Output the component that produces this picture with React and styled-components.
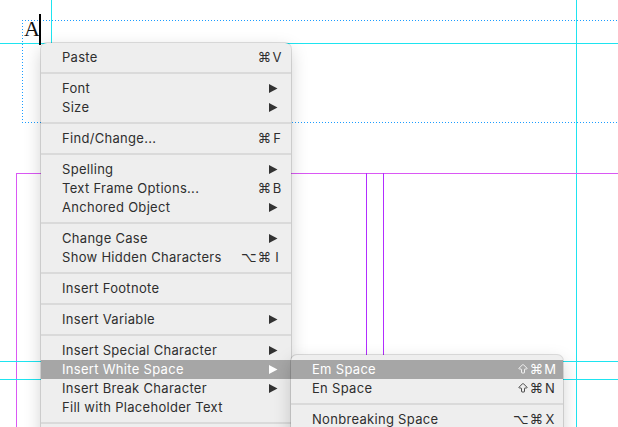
import React from "react";
import styled, { createGlobalStyle } from "styled-components";
import { ArrowBigUp } from "lucide-react";

const GlobalStyle = createGlobalStyle`
  html, body {
    margin: 0;
    padding: 0;
    background: #ffffff;
  }
  body {
    overflow: hidden;
  }
`;

const CYAN = "#1ee4f0";
const MARGIN = "#da58f4";
const COLUMN = "#b22dff";

const mainItems = [
  { label: "Paste", keys: "⌘", key: "V" },
  "sep",
  { label: "Font", sub: true },
  { label: "Size", sub: true },
  "sep",
  { label: "Find/Change...", keys: "⌘", key: "F" },
  "sep",
  { label: "Spelling", sub: true },
  { label: "Text Frame Options...", keys: "⌘", key: "B" },
  { label: "Anchored Object", sub: true },
  "sep",
  { label: "Change Case", sub: true },
  { label: "Show Hidden Characters", keys: "⌥⌘", key: "I" },
  "sep",
  { label: "Insert Footnote" },
  "sep",
  { label: "Insert Variable", sub: true },
  "sep",
  { label: "Insert Special Character", sub: true },
  { label: "Insert White Space", sub: true, active: true },
  { label: "Insert Break Character", sub: true },
  { label: "Fill with Placeholder Text" },
  "sep",
];

const spaceItems = [
  { label: "Em Space", shift: true, keys: "⌘", key: "M", active: true },
  { label: "En Space", shift: true, keys: "⌘", key: "N" },
  "sep",
  { label: "Nonbreaking Space", keys: "⌥⌘", key: "X" },
];

function MenuList({ items, keyWidth }) {
  return items.map((item, i) => {
    if (item === "sep") return <Separator key={i} />;
    return (
      <Row key={i} $active={item.active}>
        <Label>{item.label}</Label>
        {item.key && (
          <Shortcut>
            {item.shift && <ShiftIcon size={12} strokeWidth={1.7} />}
            <Mods>{item.keys}</Mods>
            <Key $w={keyWidth}>{item.key}</Key>
          </Shortcut>
        )}
        {item.sub && (
          <Arrow viewBox="0 0 9 9" $active={item.active}>
            <polygon points="0,0 8.5,4.5 0,9" />
          </Arrow>
        )}
      </Row>
    );
  });
}

export default function App() {
  return (
    <>
      <GlobalStyle />
      <Page>
        <Guide $vertical $at={51} $color={CYAN} />
        <Guide $at={43} $color={CYAN} />
        <Guide $vertical $at={576} $color={CYAN} />

        <TextFrame>
          <Glyph>A</Glyph>
          <Caret />
        </TextFrame>

        <Guide $at={173} $from={16} $color={MARGIN} />
        <Guide $vertical $at={16} $from={173} $color={MARGIN} />
        <Guide $vertical $at={366} $from={173} $color={COLUMN} />
        <Guide $vertical $at={383} $from={173} $color={COLUMN} />

        <Guide $at={361} $color={CYAN} />
        <Guide $at={379} $color={CYAN} />

        <Menu $x={41} $y={43} $w={250} $padRight={9}>
          <MenuList items={mainItems} keyWidth={10} />
        </Menu>
        <Menu $x={291} $y={355} $w={272} $padRight={7}>
          <MenuList items={spaceItems} keyWidth={12} />
        </Menu>
      </Page>
    </>
  );
}

const Page = styled.div`
  position: relative;
  width: 618px;
  height: 427px;
  overflow: hidden;
  background: #ffffff;
`;

const Guide = styled.div`
  position: absolute;
  background: ${(p) => p.$color};
  ${(p) =>
    p.$vertical
      ? `left: ${p.$at}px; top: ${p.$from || 0}px; bottom: 0; width: 1px;`
      : `top: ${p.$at}px; left: ${p.$from || 0}px; right: 0; height: 1px;`}
`;

// dotted text frame edges: 1px dot, 2px gap
const TextFrame = styled.div`
  position: absolute;
  left: 22px;
  top: 20px;
  width: 660px;
  height: 103px;
  box-sizing: border-box;
  padding: 1px 0 0 2px;
  background:
    repeating-linear-gradient(to right, #1a9cff 0 1px, transparent 1px 3px) top left / 100% 1px no-repeat,
    repeating-linear-gradient(to right, #1a9cff 0 1px, transparent 1px 3px) bottom left / 100% 1px no-repeat,
    repeating-linear-gradient(to bottom, #1a9cff 0 1px, transparent 1px 3px) top left / 1px 100% no-repeat;
`;

const Glyph = styled.span`
  display: inline-block;
  font-family: "Liberation Serif", "Times New Roman", serif;
  font-size: 22px;
  line-height: 16px;
  color: #111111;
`;

const Caret = styled.div`
  position: absolute;
  left: 17px;
  top: -6px;
  width: 2px;
  height: 31px;
  background: #000000;
`;

const Menu = styled.div`
  position: absolute;
  left: ${(p) => p.$x}px;
  top: ${(p) => p.$y}px;
  width: ${(p) => p.$w}px;
  box-sizing: border-box;
  padding: 5px 0 40px;
  background: #eeeeee;
  border-radius: 6px;
  box-shadow: 0 0 0 1px rgba(0, 0, 0, 0.12), 0 6px 18px rgba(0, 0, 0, 0.18);
  font-family: Inter, "DejaVu Sans", sans-serif;
  font-size: 13px;
  letter-spacing: 0.3px;
  color: #2e2e2e;

  --pad-right: ${(p) => p.$padRight}px;
`;

const Row = styled.div`
  display: flex;
  align-items: center;
  box-sizing: border-box;
  height: 19px;
  padding: 0 var(--pad-right) 2px 21px;
  background: ${(p) => (p.$active ? "#a6a6a6" : "transparent")};
  color: ${(p) => (p.$active ? "#ffffff" : "inherit")};
`;

const Label = styled.span`
  flex: 1;
  white-space: nowrap;
`;

const Shortcut = styled.span`
  display: flex;
  align-items: center;
`;

const ShiftIcon = styled(ArrowBigUp)`
  margin: 1px 1px 0 0;
`;

const Mods = styled.span`
  font-family: "DejaVu Sans", sans-serif;
  font-size: 13.5px;
  letter-spacing: 1px;
`;

const Key = styled.span`
  width: ${(p) => p.$w}px;
  text-align: center;
  letter-spacing: 0;
`;

const Arrow = styled.svg`
  width: 9px;
  height: 9px;
  margin: 2px 4px 0 0;
  fill: ${(p) => (p.$active ? "#ffffff" : "#333333")};
`;

const Separator = styled.div`
  height: 2px;
  margin: 5px 0;
  background: #dadada;
`;
